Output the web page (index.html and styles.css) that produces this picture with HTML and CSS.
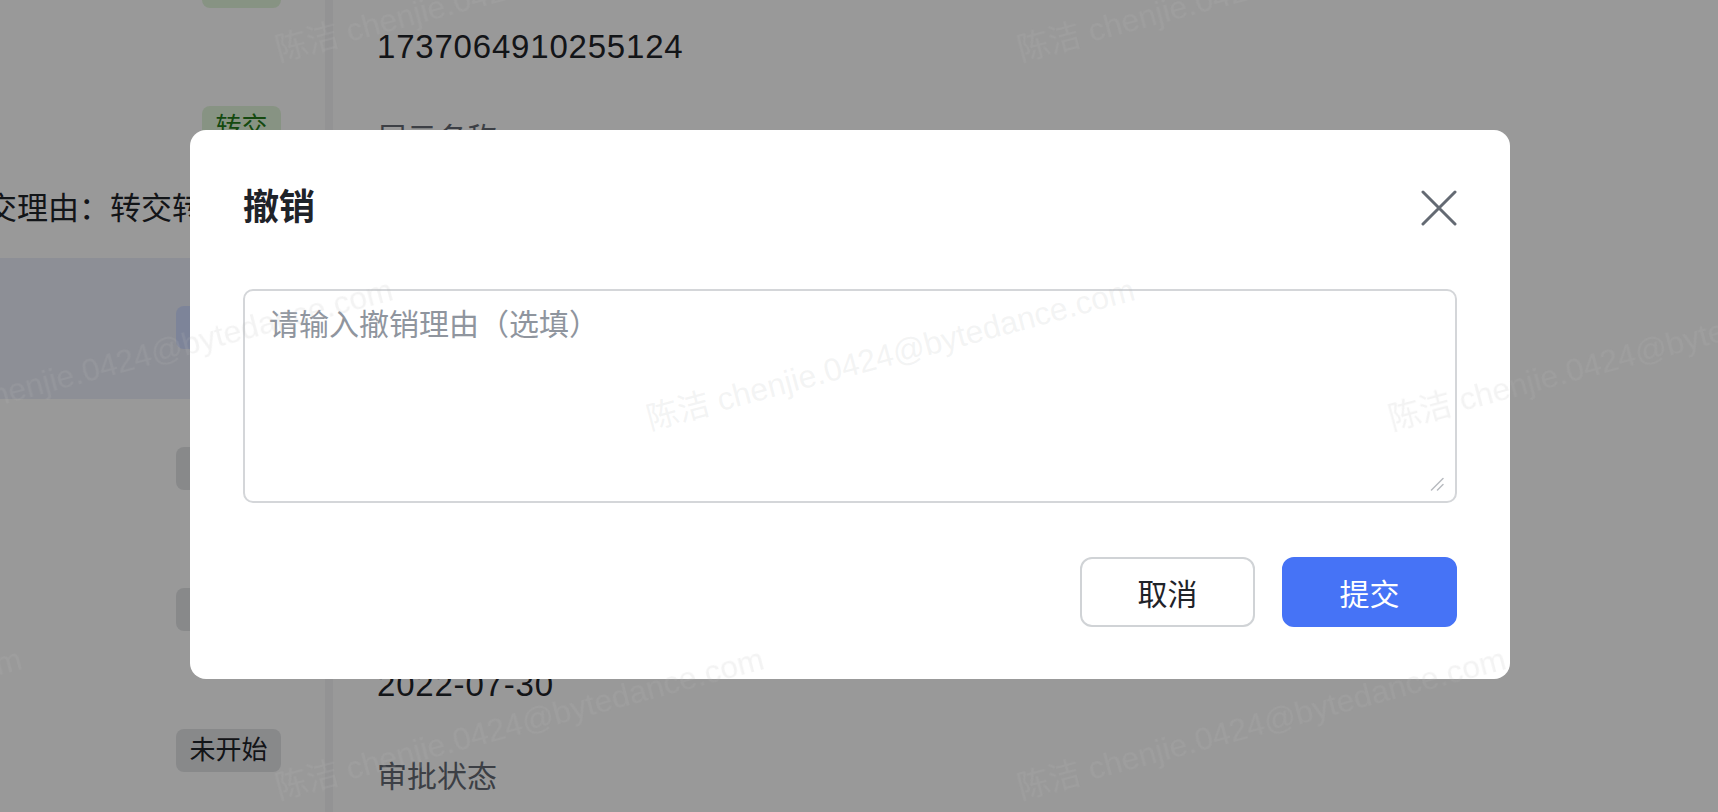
FILE: index.html
```html
<!DOCTYPE html>
<html lang="zh-CN">
<head>
    <meta charset="UTF-8">
    <meta name="viewport" content="width=device-width, initial-scale=1.0">
    <title>撤销审批</title>
    <link rel="stylesheet" href="styles.css">
</head>
<body>

    <div class="page">
        <aside class="timeline">
            <div class="node"><span class="tag tag-green">转交</span></div>
            <div class="node node-reason">
                <span class="tag tag-green">转交</span>
                <p class="reason">转交理由：转交转交转交转交</p>
            </div>
            <div class="node node-active"><span class="tag tag-blue">审批中</span></div>
            <div class="node"><span class="tag tag-gray">未开始</span></div>
            <div class="node"><span class="tag tag-gray">未开始</span></div>
            <div class="node"><span class="tag tag-gray">未开始</span></div>
        </aside>
        <div class="divider"></div>
        <main class="detail">
            <div class="field field-first">
                <div class="field-value">1737064910255124</div>
            </div>
            <div class="field">
                <div class="field-label">展示名称</div>
                <div class="field-value">撤销测试审批</div>
            </div>
            <div class="field">
                <div class="field-label">申请人</div>
                <div class="field-value">陈洁</div>
            </div>
            <div class="field">
                <div class="field-label">所属部门</div>
                <div class="field-value">研发部</div>
            </div>
            <div class="field">
                <div class="field-label">提交日期</div>
                <div class="field-value">2022-07-30</div>
            </div>
            <div class="field">
                <div class="field-label">审批状态</div>
                <div class="field-value">审批中</div>
            </div>
        </main>
    </div>

    <div class="mask">
        <div class="dialog">
            <div class="dialog-header">
                <h2 class="dialog-title">撤销</h2>
                <button class="dialog-close" aria-label="关闭">
                    <svg width="36" height="36" viewBox="0 0 36 36">
                        <path d="M2 2 L34 34 M34 2 L2 34" stroke="#646a73" stroke-width="3" stroke-linecap="round" fill="none"/>
                    </svg>
                </button>
            </div>
            <div class="reason-box">
                <textarea class="reason-input" placeholder="请输入撤销理由（选填）"></textarea>
                <svg class="resize-grip" width="14" height="14" viewBox="0 0 14 14">
                    <path d="M1.5 13 L13 1.5 M7.5 13 L13 7.5" stroke="#b8bbc0" stroke-width="1.5" stroke-linecap="round" fill="none"/>
                </svg>
            </div>
            <div class="dialog-actions">
                <button class="btn btn-cancel">取消</button>
                <button class="btn btn-primary">提交</button>
            </div>
        </div>
    </div>

    <div class="watermark" id="watermark"></div>

    <script>
        // watermark tiles, staggered every other row
        const layer = document.getElementById("watermark");
        const stepX = 742;
        const stepY = 369;
        for (let row = 0; row < 3; row++) {
            const baseY = 61 + row * stepY;
            const shift = row % 2 === 0 ? 371 : 0;
            for (let col = -1; col < 3; col++) {
                const x = -92 + shift + col * stepX;
                if (x > 1718) continue;
                const mark = document.createElement("span");
                mark.className = "wm-text";
                mark.textContent = "陈洁 chenjie.0424@bytedance.com";
                mark.style.left = x + "px";
                mark.style.top = (baseY - 27) + "px";
                layer.appendChild(mark);
            }
        }
    </script>

</body>
</html>
```

FILE: styles.css
```css
html, body {
    margin: 0;
    width: 1718px;
    height: 812px;
    overflow: hidden;
    background: #fff;
    font-family: "Liberation Sans", "Noto Sans CJK SC", sans-serif;
    color: #1f2329;
}

.page {
    display: flex;
    height: 812px;
    overflow: hidden;
}

/* left: approval timeline */
.timeline {
    width: 325px;
    flex-shrink: 0;
    margin-top: -83px;
    overflow: hidden;
}
.node {
    display: flex;
    flex-direction: column;
    align-items: flex-end;
    padding: 48px 44px 50px 0;
}
.node-reason { padding-bottom: 28.5px; }
.node-active { background: #eceefa; }
.tag {
    height: 43px;
    line-height: 43px;
    padding: 0 13.5px;
    border-radius: 8px;
    font-size: 26px;
    white-space: nowrap;
}
.tag-green { background: #e2f6da; color: #237b19; }
.tag-blue { background: #d0dcff; color: #245bdb; }
.tag-gray { background: #e3e5e7; color: #1f2329; }
.reason {
    align-self: flex-start;
    margin: 38.5px 0 0 -45px;
    font-size: 31px;
    line-height: 42px;
    white-space: nowrap;
    color: #1f2329;
}

.divider {
    width: 8px;
    flex-shrink: 0;
    background: #f5f6f7;
}

/* right: detail fields */
.detail {
    flex: 1;
    padding: 23.5px 0 0 44px;
}
.field-label {
    font-size: 30px;
    line-height: 42px;
    color: #646a73;
    margin-bottom: 23.5px;
}
.field-value {
    font-size: 33px;
    line-height: 46px;
    letter-spacing: 0.8px;
    color: #1f2329;
    margin-bottom: 48px;
}

/* modal */
.mask {
    position: fixed;
    inset: 0;
    background: rgba(0, 0, 0, 0.4);
    display: flex;
    align-items: center;
    justify-content: center;
    padding: 0 18px 3px 0;
}
.dialog {
    width: 1320px;
    box-sizing: border-box;
    background: #fff;
    border-radius: 16px;
    padding: 53px 53px 52px;
}
.dialog-header {
    display: flex;
    align-items: center;
    justify-content: space-between;
    height: 50px;
}
.dialog-title {
    margin: 0;
    font-size: 36px;
    line-height: 50px;
    font-weight: 700;
    color: #1f2329;
}
.dialog-close {
    display: flex;
    padding: 0;
    border: none;
    background: none;
    cursor: pointer;
}
.reason-box {
    position: relative;
    margin-top: 56px;
}
.reason-input {
    display: block;
    width: 100%;
    height: 214px;
    box-sizing: border-box;
    border: 2px solid #d4d6d9;
    border-radius: 10px;
    padding: 13px 24px 10px;
    font-family: inherit;
    font-size: 30px;
    line-height: 42px;
    color: #1f2329;
    resize: none;
    outline: none;
}
.reason-input::placeholder { color: #8f959e; }
.resize-grip {
    position: absolute;
    right: 13px;
    bottom: 12px;
}
.dialog-actions {
    display: flex;
    justify-content: flex-end;
    gap: 27px;
    margin-top: 54px;
}
.btn {
    width: 175px;
    height: 70px;
    box-sizing: border-box;
    border-radius: 12px;
    font-family: inherit;
    font-size: 30px;
    cursor: pointer;
}
.btn-cancel { background: #fff; border: 2px solid #d0d3d6; color: #1f2329; }
.btn-primary { background: #4673f6; border: 2px solid #4673f6; color: #fff; }

/* watermark over everything */
.watermark {
    position: fixed;
    inset: 0;
    pointer-events: none;
    overflow: hidden;
}
.wm-text {
    position: absolute;
    font-size: 32px;
    line-height: 32px;
    white-space: nowrap;
    color: rgba(183, 186, 186, 0.17);
    transform-origin: 0 27px;
    transform: rotate(-15deg);
}
```
